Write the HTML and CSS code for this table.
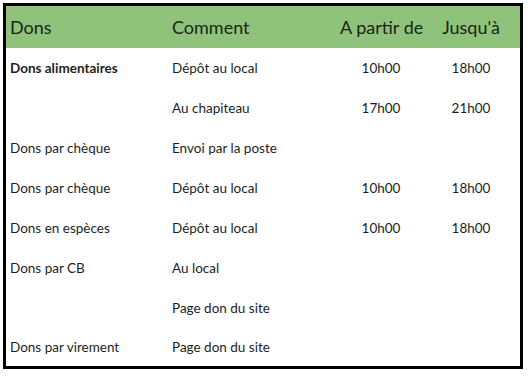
FILE: index.html
```html
<!DOCTYPE html>
<html lang="fr">
<head>
<meta charset="utf-8">
<link rel="stylesheet" href="styles.css">
</head>
<body>
<div class="frame">
<table class="dons">
<thead>
<tr><th class="c1">Dons</th><th class="c2">Comment</th><th class="c3">A partir de</th><th class="c4">Jusqu'à</th></tr>
</thead>
<tbody>
<tr><td class="c1 bold">Dons alimentaires</td><td class="c2">Dépôt au local</td><td class="c3">10h00</td><td class="c4">18h00</td></tr>
<tr><td class="c1"></td><td class="c2">Au chapiteau</td><td class="c3">17h00</td><td class="c4">21h00</td></tr>
<tr><td class="c1">Dons par chèque</td><td class="c2">Envoi par la poste</td><td class="c3"></td><td class="c4"></td></tr>
<tr><td class="c1">Dons par chèque</td><td class="c2">Dépôt au local</td><td class="c3">10h00</td><td class="c4">18h00</td></tr>
<tr><td class="c1">Dons en espèces</td><td class="c2">Dépôt au local</td><td class="c3">10h00</td><td class="c4">18h00</td></tr>
<tr><td class="c1">Dons par CB</td><td class="c2">Au local</td><td class="c3"></td><td class="c4"></td></tr>
<tr><td class="c1"></td><td class="c2">Page don du site</td><td class="c3"></td><td class="c4"></td></tr>
<tr class="last"><td class="c1">Dons par virement</td><td class="c2">Page don du site</td><td class="c3"></td><td class="c4"></td></tr>
</tbody>
</table>
</div>
</body>
</html>
```

FILE: styles.css
```css
html, body {
  margin: 0;
  padding: 0;
  background: #ffffff;
}
body {
  padding: 3px 0 0 3px;
  font-family: "Lato", "Open Sans", sans-serif;
  color: #1e1e1e;
}
.frame {
  width: 514px;
  border: 3px solid #000;
  background: #fff;
}
.dons {
  width: 514px;
  border-collapse: collapse;
  table-layout: fixed;
}
.dons th,
.dons td {
  box-sizing: border-box;
  padding: 0;
  white-space: nowrap;
  vertical-align: middle;
}
.dons th {
  background: #8fc37c;
  height: 42px;
  font-weight: normal;
  font-size: 18px;
  color: #1a2414;
  text-align: left;
}
.dons td {
  height: 40px;
  font-size: 13.5px;
}
.dons .last td {
  height: 38px;
}
.dons .c1 { width: 160px; padding-left: 4px; }
.dons .c2 { width: 174px; padding-left: 6px; }
.dons .c3 { width: 82px; text-align: center; }
.dons .c4 { width: 98px; text-align: center; }
.dons .bold { font-weight: bold; }
```
